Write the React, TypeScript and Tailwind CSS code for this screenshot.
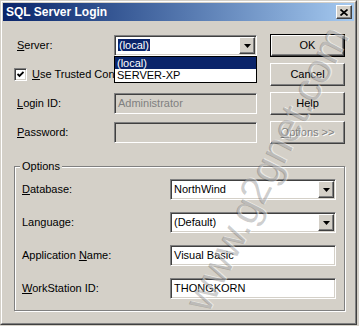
import type { ReactNode } from 'react'

const sunken =
  'border border-t-[#808080] border-l-[#808080] border-b-white border-r-white shadow-[inset_1px_1px_0_#404040,inset_-1px_-1px_0_#d4d0c8]'
const raised =
  'border border-t-white border-l-white border-b-[#404040] border-r-[#404040] shadow-[inset_-1px_-1px_0_#808080]'

function U({ children }: { children: ReactNode }) {
  return <span className="underline underline-offset-[1px]">{children}</span>
}

function Arrow() {
  return (
    <svg width="7" height="4" viewBox="0 0 7 4">
      <polygon points="0,0 7,0 3.5,4" fill="#000" />
    </svg>
  )
}

function Combo({ width, children }: { width: string; children: ReactNode }) {
  return (
    <div className={`${sunken} ${width} h-[21px] bg-white flex items-center p-px`}>
      <div className="flex-1 pl-[2px] truncate leading-[17px]">{children}</div>
      <div className={`${raised} w-[16px] h-[17px] bg-[#d4d0c8] flex items-center justify-center`}>
        <Arrow />
      </div>
    </div>
  )
}

function Field({ width, value, disabled }: { width: string; value: string; disabled?: boolean }) {
  return (
    <div
      className={`${sunken} ${width} h-[21px] flex items-center pl-[3px] ${
        disabled ? 'bg-[#d4d0c8] text-[#808080]' : 'bg-white'
      }`}
    >
      {value}
    </div>
  )
}

function Button({ label, isDefault, disabled }: { label: ReactNode; isDefault?: boolean; disabled?: boolean }) {
  const inner = (
    <div
      className={`${raised} w-full h-full bg-[#d4d0c8] flex items-center justify-center ${
        disabled ? 'text-[#808080] [text-shadow:1px_1px_0_#fff]' : ''
      }`}
    >
      {label}
    </div>
  )
  if (isDefault) {
    return <div className="w-[75px] h-[23px] border border-black">{inner}</div>
  }
  return <div className="w-[75px] h-[23px]">{inner}</div>
}

const options = [
  { label: <><U>D</U>atabase:</>, combo: true, value: 'NorthWind' },
  { label: <>Language:</>, combo: true, value: '(Default)' },
  { label: <>Application <U>N</U>ame:</>, combo: false, value: 'Visual Basic' },
  { label: <><U>W</U>orkStation ID:</>, combo: false, value: 'THONGKORN' },
]

export default function App() {
  return (
    <div className="w-[359px] h-[326px] bg-[#d4d0c8] font-['Liberation_Sans',Arial,sans-serif] text-[11px] text-black">
      <div className="relative w-[357px] h-[325px] border border-t-[#d4d0c8] border-l-[#d4d0c8] border-b-[#404040] border-r-[#404040] overflow-hidden">
        <div className="h-full border border-t-white border-l-white border-b-[#808080] border-r-[#808080] p-px flex flex-col">
          {/* title bar */}
          <div className="h-[18px] flex items-center justify-between pl-[3px] pr-[2px] bg-linear-to-r from-[#0a246a] to-[#a6caf0]">
            <span className="text-white font-bold text-[12px]">SQL Server Login</span>
            <div className={`${raised} w-[16px] h-[14px] bg-[#d4d0c8] flex items-center justify-center`}>
              <svg width="8" height="7" viewBox="0 0 8 7">
                <path d="M0.5 0.5 L7.5 6.5 M7.5 0.5 L0.5 6.5" stroke="#000" strokeWidth="1.7" />
              </svg>
            </div>
          </div>

          <div className="flex-1 pl-[11px] pt-[13px]">
            <div className="flex">
              <div className="w-[243px] flex flex-col gap-[6px]">
                <div className="h-[23px] flex items-center">
                  <div className="w-[100px] pl-[3px]">
                    <U>S</U>erver:
                  </div>
                  <div className="relative">
                    <Combo width="w-[143px]">
                      <span className="bg-[#0a246a] text-white px-px">(local)</span>
                    </Combo>
                    <div className="absolute left-0 top-[21px] w-[143px] border border-black bg-white z-10">
                      <div className="h-[12px] leading-[12px] pl-[2px] bg-[#0a246a] text-white">(local)</div>
                      <div className="h-[13px] leading-[13px] pl-[2px]">SERVER-XP</div>
                    </div>
                  </div>
                </div>
                <div className="h-[23px] flex items-center">
                  <div className={`${sunken} w-[13px] h-[13px] bg-white flex items-center justify-center`}>
                    <svg width="7" height="7" viewBox="0 0 7 7">
                      <path d="M0.5 3 L2.5 5 L6.5 1" stroke="#000" strokeWidth="1.8" fill="none" />
                    </svg>
                  </div>
                  <span className="ml-[5px]">
                    <U>U</U>se Trusted Connection
                  </span>
                </div>
                <div className="h-[23px] flex items-center">
                  <div className="w-[100px] pl-[3px]">
                    <U>L</U>ogin ID:
                  </div>
                  <Field width="w-[143px]" value="Administrator" disabled />
                </div>
                <div className="h-[23px] flex items-center">
                  <div className="w-[100px] pl-[3px]">
                    <U>P</U>assword:
                  </div>
                  <Field width="w-[143px]" value="" disabled />
                </div>
              </div>

              <div className="ml-[13px] flex flex-col gap-[6px]">
                <Button label="OK" isDefault />
                <Button label="Cancel" />
                <Button label="Help" />
                <Button label={<><U>O</U>ptions &gt;&gt;</>} disabled />
              </div>
            </div>

            {/* options group */}
            <div className="relative mt-[22px] w-[331px] h-[145px] border border-[#808080] shadow-[1px_1px_0_#fff,inset_1px_1px_0_#fff] pl-[7px] pt-[12px]">
              <span className="absolute left-[5px] top-[-8px] px-[2px] bg-[#d4d0c8] leading-[14px]">Options</span>
              <div className="flex flex-col gap-[12px]">
                {options.map((o, i) => (
                  <div key={i} className="h-[21px] flex items-center">
                    <div className="w-[148px]">{o.label}</div>
                    {o.combo ? (
                      <Combo width="w-[166px]">{o.value}</Combo>
                    ) : (
                      <Field width="w-[166px]" value={o.value} />
                    )}
                  </div>
                ))}
              </div>
            </div>
          </div>
        </div>

        {/* watermark */}
        <div className="absolute left-[266px] top-[168px] -translate-x-1/2 -translate-y-1/2 rotate-[-63deg] whitespace-nowrap text-[41px] text-black/20 [text-shadow:1px_1px_0_rgba(255,255,255,0.5)] pointer-events-none z-20">
          www.g2gnet.com
        </div>
      </div>
    </div>
  )
}
